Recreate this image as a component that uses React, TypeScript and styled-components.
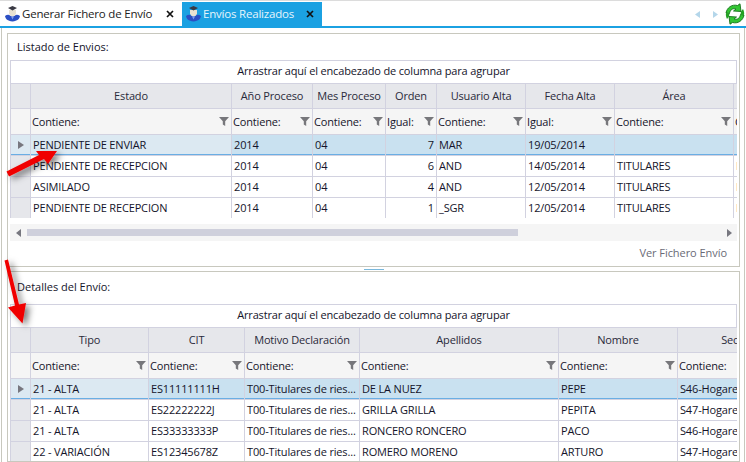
import React from "react";
import styled, { createGlobalStyle } from "styled-components";

const Global = createGlobalStyle`
  html, body { margin: 0; padding: 0; background: #fff; }
  * { box-sizing: border-box; }
`;

const Page = styled.div`
  position: relative;
  width: 746px;
  height: 462px;
  overflow: hidden;
  background: #fff;
  font-family: "Open Sans", "Noto Sans", "Liberation Sans", sans-serif;
  font-size: 11px;
  letter-spacing: -0.16px;
  color: #14142a;
  display: flex;
  flex-direction: column;
`;

const TabStrip = styled.div`
  height: 28px;
  flex: none;
  display: flex;
  padding: 1px 0 0 1px;
  border-top: 1px solid #dcdcdc;
  border-bottom: 2px solid #1ba1e2;
`;

const Tab = styled.div<{ $active?: boolean; $w: number }>`
  width: ${(p) => p.$w}px;
  display: flex;
  align-items: center;
  padding: 0 8px 1px 4px;
  gap: 2px;
  font-size: 11.5px;
  letter-spacing: -0.2px;
  background: ${(p) => (p.$active ? "#1ba1e2" : "#fff")};
  color: ${(p) => (p.$active ? "#e6f5fc" : "#222")};
`;

const TabLabel = styled.span`
  flex: 1;
  white-space: nowrap;
`;

const TabClose = styled.svg`
  width: 8px;
  height: 8px;
  flex: none;
`;

const TabIcon = styled.svg`
  width: 15px;
  height: 17px;
  flex: none;
`;

const TabTools = styled.div`
  margin-left: auto;
  display: flex;
  align-items: center;
  gap: 13px;
`;

const RefreshIcon = styled.svg`
  width: 22px;
  height: 22px;
  margin-left: -7px;
`;

const Body = styled.div`
  flex: 1;
  min-height: 0;
  margin: 0 1px;
  padding: 5px 4px 0 5px;
  border-left: 1px solid #c8c8be;
  border-right: 1px solid #c8c8be;
  display: flex;
  flex-direction: column;
`;

const Panel = styled.section<{ $h?: number }>`
  height: ${(p) => (p.$h ? `${p.$h}px` : "auto")};
  flex: ${(p) => (p.$h ? "none" : "1")};
  min-height: 0;
  overflow: hidden;
  border: 1px solid #c8c8be;
  padding: 0 2px;
`;

const PanelTitle = styled.div<{ $h: number; $top: number }>`
  height: ${(p) => p.$h}px;
  padding: ${(p) => p.$top}px 0 0 7px;
  line-height: 15px;
  letter-spacing: 0;
`;

const Splitter = styled.div`
  height: 4px;
  flex: none;
  display: flex;
  justify-content: center;
  padding-top: 2px;
`;

const SplitterGrip = styled.div`
  width: 20px;
  height: 1px;
  background: #7ab8dc;
`;

const GroupBar = styled.div`
  height: 23px;
  border: 1px solid #d2d2e0;
  border-bottom: none;
  padding-bottom: 3px;
  display: flex;
  align-items: center;
  justify-content: center;
`;

const GridViewport = styled.div`
  overflow: hidden;
`;

const GridRow = styled.div<{ $cols: string; $h: number }>`
  display: grid;
  grid-template-columns: ${(p) => p.$cols};
  width: max-content;
  height: ${(p) => p.$h}px;
  border-left: 1px solid #d2d2e0;
  border-top: 1px solid #d2d2e0;
`;

const Cell = styled.div<{ $bg?: string; $right?: boolean; $line?: string }>`
  min-width: 0;
  overflow: hidden;
  white-space: nowrap;
  display: flex;
  align-items: center;
  justify-content: ${(p) => (p.$right ? "flex-end" : "flex-start")};
  padding: 0 2px 2px 2px;
  background: ${(p) => p.$bg || "#fff"};
  border-right: 1px solid #d2d2e0;
  ${(p) => (p.$line ? `box-shadow: inset 0 -1px 0 ${p.$line};` : "")}
`;

const HeadCell = styled(Cell)`
  justify-content: center;
  background: #e6e7eb;
  color: #2a2a3a;
`;

const FilterCell = styled(Cell)`
  justify-content: space-between;
  background: #f5f5f5;
  padding: 0 2px 1px 1px;
`;

const Indicator = styled(Cell)<{ $sel?: boolean }>`
  background: ${(p) => (p.$sel ? "#dce9f2" : "#e6e7eb")};
  justify-content: center;
  padding: 0;
`;

const ScrollBar = styled.div`
  height: 17px;
  margin-top: 6px;
  background: #f5f5f5;
  display: flex;
  align-items: center;
  padding: 0 5px 0 6px;
`;

const ScrollThumb = styled.div`
  flex: 1;
  height: 7px;
  margin: 0 209px 0 6px;
  background: #cfd0dc;
`;

const ActionRow = styled.div`
  height: 22px;
  display: flex;
  align-items: center;
  justify-content: flex-end;
  padding-right: 10px;
  color: #6a6a76;
  letter-spacing: -0.05px;
`;

const FunnelIcon = styled.svg`
  flex: none;
  width: 10px;
  height: 10px;
`;

const Annotation = styled.svg`
  position: absolute;
  left: 0;
  top: 0;
  width: 746px;
  height: 462px;
  pointer-events: none;
`;

const Funnel = () => (
  <FunnelIcon viewBox="0 0 10 10">
    <path d="M0 1h10L6.200 5.200V10L3.800 8.600V5.200z" fill="#77777b" />
  </FunnelIcon>
);

const RowMark = () => (
  <svg width="6" height="8" viewBox="0 0 6 8">
    <path d="M0 0l6 4-6 4z" fill="#77777f" />
  </svg>
);

const CloseX = () => (
  <TabClose viewBox="0 0 8 8">
    <path d="M1 1l6 6M7 1L1 7" stroke="#111" strokeWidth="1.7" />
  </TabClose>
);

const UserIcon = () => (
  <TabIcon viewBox="0 0 15 17">
    <path d="M0 11C2 9.500 4 9.500 5 10.500l2.500 1 2.500-1c1-1 3-1 5 .5-.5 3-2.500 5-7.500 5.500C2.500 16 .5 14 0 11z" fill="#2b4fc4" />
    <path d="M4 5h7v3.500c-.5 2-2 3-3.500 3S4.500 10.500 4 8.500z" fill="#e9e2d2" />
    <path d="M3 3L7.500 1 12 3 7.500 5.500z" fill="#3a3a44" />
    <path d="M6 11.500h3l-1.500 3z" fill="#7f9cf0" />
  </TabIcon>
);

const Refresh = () => (
  <RefreshIcon viewBox="0 0 22 22">
    <path d="M2 10C3 4.500 8 1 13.500 2.500L16 .8l1 7.700-7.500-.5 2.500-2C8.500 5 6 7 5.500 10.500z" fill="#33c633" stroke="#14701a" strokeWidth=".9" strokeLinejoin="round" />
    <path d="M20 12c-1 5.500-6 9-11.500 7.500L6 21.200 5 13.500l7.500.5-2.500 2c3.500 1 6-1 6.500-4.500z" fill="#33c633" stroke="#14701a" strokeWidth=".9" strokeLinejoin="round" />
    <path d="M5.500 10.500L2 10c-.4 2 0 4 1 6l2-2.500z" fill="#22a022" />
    <path d="M16.500 11.500L20 12c.4-2 0-4-1-6l-2 2.500z" fill="#22a022" />
  </RefreshIcon>
);

const NavArrow = ({ dir }: { dir: "l" | "r" }) => (
  <svg width="5" height="7" viewBox="0 0 5 7">
    <path d={dir === "l" ? "M5 0L0 3.500 5 7z" : "M0 0l5 3.500L0 7z"} fill="#b4d6ea" />
  </svg>
);

type GridProps = {
  cols: string;
  heads: string[];
  filters: string[];
  rows: string[][];
  rightCol?: number;
};

const DataGrid = ({ cols, heads, filters, rows, rightCol }: GridProps) => (
  <>
    <GroupBar>Arrastrar aquí el encabezado de columna para agrupar</GroupBar>
    <GridViewport>
      <GridRow $cols={cols} $h={25}>
        <HeadCell />
        {heads.map((h, i) => (
          <HeadCell key={i}>{h}</HeadCell>
        ))}
      </GridRow>
      <GridRow $cols={cols} $h={26}>
        <FilterCell />
        {filters.map((f, i) => (
          <FilterCell key={i}>
            <span>{f}</span>
            <Funnel />
          </FilterCell>
        ))}
      </GridRow>
      {rows.map((r, ri) => {
        const sel = ri === 0;
        const line = sel ? "#6aaee4" : undefined;
        return (
          <GridRow key={ri} $cols={cols} $h={21}>
            <Indicator $sel={sel} $line={line}>
              {sel ? <RowMark /> : null}
            </Indicator>
            {r.map((c, ci) => (
              <Cell
                key={ci}
                $right={ci === rightCol}
                $line={line}
                $bg={sel ? (ci === 0 ? "#dce9f2" : "#c9e1f0") : "#fff"}
              >
                {c}
              </Cell>
            ))}
          </GridRow>
        );
      })}
    </GridViewport>
  </>
);

const topCols = "20px 201px 81px 73px 51px 89px 89px 119px 100px";
const bottomCols = "20px 118px 96px 115px 199px 119px 119px";
const motivo = "T00-Titulares de ries...";

export default function App() {
  return (
    <Page>
      <Global />
      <TabStrip>
        <Tab $w={181}>
          <UserIcon />
          <TabLabel>Generar Fichero de Envío</TabLabel>
          <CloseX />
        </Tab>
        <Tab $w={140} $active>
          <UserIcon />
          <TabLabel>Envíos Realizados</TabLabel>
          <CloseX />
        </Tab>
        <TabTools>
          <NavArrow dir="l" />
          <NavArrow dir="r" />
          <Refresh />
        </TabTools>
      </TabStrip>
      <Body>
        <Panel $h={234}>
          <PanelTitle $h={26} $top={5}>Listado de Envios:</PanelTitle>
          <DataGrid
            cols={topCols}
            rightCol={3}
            heads={["Estado", "Año Proceso", "Mes Proceso", "Orden", "Usuario Alta", "Fecha Alta", "Área", ""]}
            filters={["Contiene:", "Contiene:", "Contiene:", "Igual:", "Contiene:", "Igual:", "Contiene:", "Contiene:"]}
            rows={[
              ["PENDIENTE DE ENVIAR", "2014", "04", "7", "MAR", "19/05/2014", "", ""],
              ["PENDIENTE DE RECEPCION", "2014", "04", "6", "AND", "14/05/2014", "TITULARES", "I"],
              ["ASIMILADO", "2014", "04", "4", "AND", "12/05/2014", "TITULARES", "I"],
              ["PENDIENTE DE RECEPCION", "2014", "04", "1", "_SGR", "12/05/2014", "TITULARES", "I"],
            ]}
          />
          <ScrollBar>
            <svg width="5" height="8" viewBox="0 0 5 8">
              <path d="M5 0L0 4l5 4z" fill="#77777f" />
            </svg>
            <ScrollThumb />
            <svg width="5" height="8" viewBox="0 0 5 8">
              <path d="M0 0l5 4-5 4z" fill="#77777f" />
            </svg>
          </ScrollBar>
          <ActionRow>Ver Fichero Envío</ActionRow>
        </Panel>
        <Splitter>
          <SplitterGrip />
        </Splitter>
        <Panel>
          <PanelTitle $h={32} $top={7}>Detalles del Envío:</PanelTitle>
          <DataGrid
            cols={bottomCols}
            heads={["Tipo", "CIT", "Motivo Declaración", "Apellidos", "Nombre", "Sector"]}
            filters={["Contiene:", "Contiene:", "Contiene:", "Contiene:", "Contiene:", "Contiene:"]}
            rows={[
              ["21 - ALTA", "ES11111111H", motivo, "DE LA NUEZ", "PEPE", "S46-Hogares"],
              ["21 - ALTA", "ES22222222J", motivo, "GRILLA GRILLA", "PEPITA", "S47-Hogares"],
              ["21 - ALTA", "ES33333333P", motivo, "RONCERO RONCERO", "PACO", "S46-Hogares"],
              ["22 - VARIACIÓN", "ES12345678Z", motivo, "ROMERO MORENO", "ARTURO", "S47-Hogares"],
            ]}
          />
        </Panel>
      </Body>
      <Annotation viewBox="0 0 746 462">
        <defs>
          <filter id="arrowShadow" x="-30%" y="-30%" width="170%" height="170%">
            <feDropShadow dx="4" dy="3" stdDeviation="3" floodColor="#000" floodOpacity="0.5" />
          </filter>
        </defs>
        <g filter="url(#arrowShadow)" fill="#f00000">
          <path d="M6.500 171.500L39 155 36 151 57 151 48 164 44 159 9 176.500z" />
          <path d="M4.500 260.500L8 259.500 19 304.500 26 303 22.500 323.500 8 307.500 15 305.500z" />
        </g>
      </Annotation>
    </Page>
  );
}
